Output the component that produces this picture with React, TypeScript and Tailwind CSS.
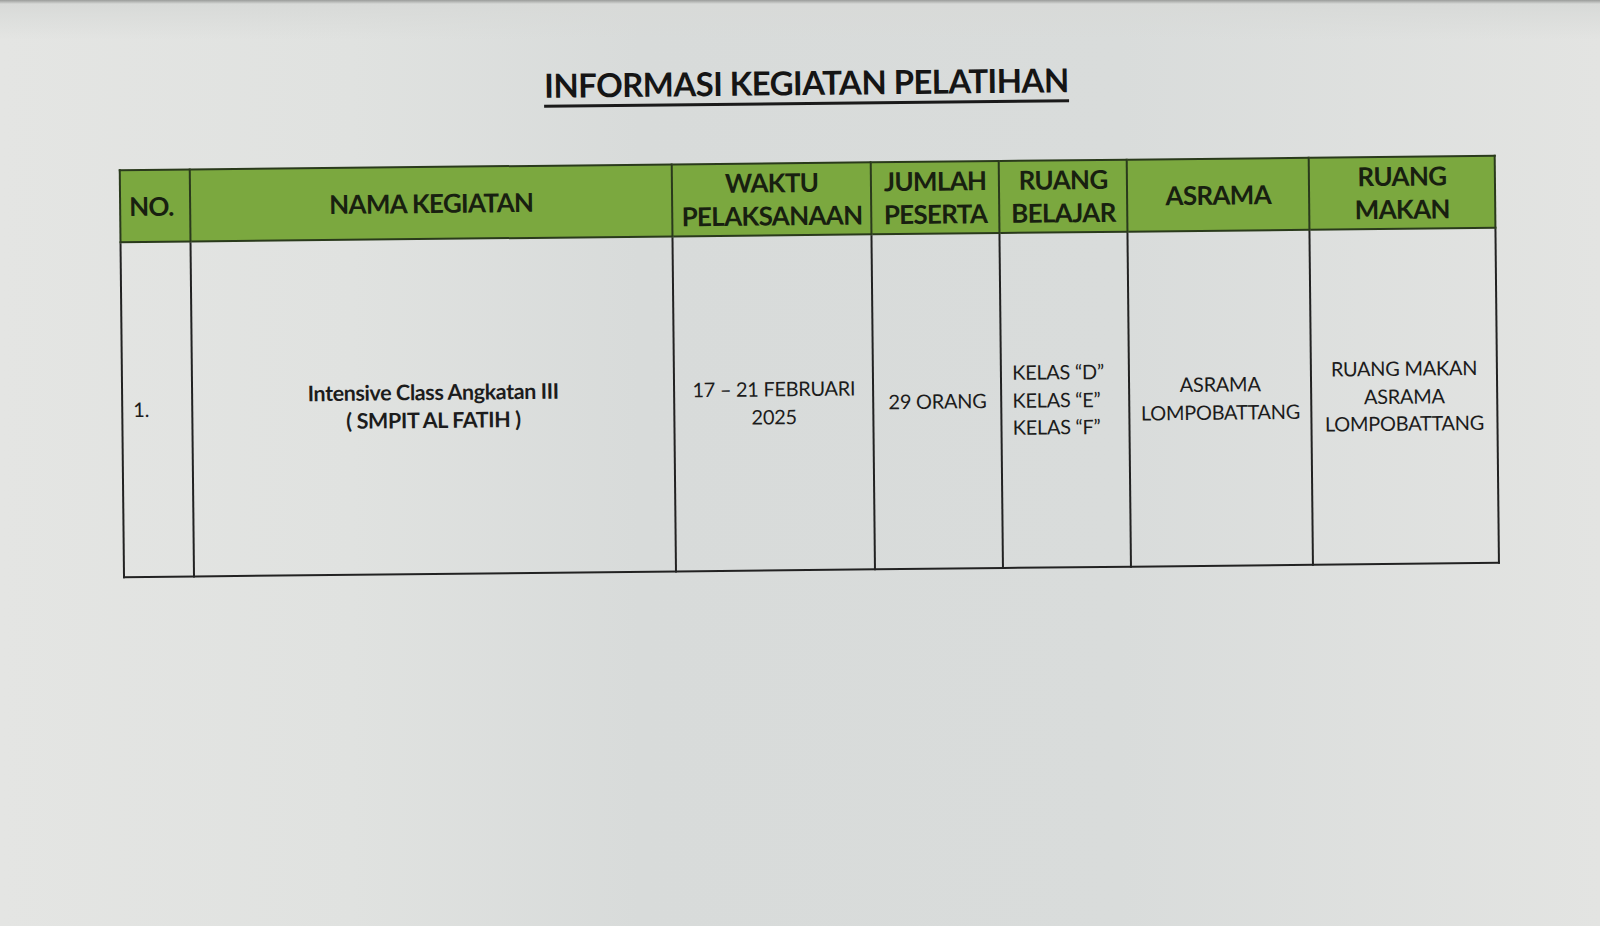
const headers = [
  { label: ["NO."], w: "w-[70px]", align: "left" },
  { label: ["NAMA KEGIATAN"], w: "w-[484px]" },
  { label: ["WAKTU", "PELAKSANAAN"], w: "w-[199px]" },
  { label: ["JUMLAH", "PESERTA"], w: "w-[128px]" },
  { label: ["RUANG", "BELAJAR"], w: "w-[128px]" },
  { label: ["ASRAMA"], w: "w-[182px]" },
  { label: ["RUANG", "MAKAN"], w: "w-[186px]" },
];

export default function App() {
  return (
    <div
      className="h-[926px] w-[1600px] overflow-hidden bg-[#dde0dd] text-[#1c1c1c]"
      style={{
        backgroundImage:
          "linear-gradient(180deg, #9a9c9a 0px, #d8dad8 4px, transparent 40px), linear-gradient(90deg, #e4e5e3 0%, #e0e2e0 22%, #d8dbda 40%, #d9dcdb 70%, #e3e4e2 100%)",
        fontFamily: "Lato, 'Open Sans', sans-serif",
      }}
    >
      <div className="ml-[120px] w-[1377px] -rotate-[0.6deg] pt-[63px]">
        <div className="flex justify-center">
          <h1 className="border-b-[3px] border-[#1a1a1a] pb-[1px] text-[33px] font-bold leading-[38px] tracking-[-0.6px] text-[#151515]">
            INFORMASI KEGIATAN PELATIHAN
          </h1>
        </div>

        <table className="mt-[57px] w-[1377px] border-collapse border-2 border-[#222]">
          <thead>
            <tr className="h-[72px] bg-[#7ba83f]">
              {headers.map((h, i) => (
                <th
                  key={i}
                  className={`${h.w} border-2 border-[#2a3a1c] px-2 text-[26px] font-bold leading-[33px] tracking-[-0.7px] text-[#182010] ${
                    h.align === "left" ? "text-left" : "text-center"
                  }`}
                >
                  {h.label.map((l) => (
                    <div key={l}>{l}</div>
                  ))}
                </th>
              ))}
            </tr>
          </thead>
          <tbody>
            <tr className="h-[335px] text-[20px] leading-[27.5px] tracking-[-0.3px]">
              <td className="border-2 border-[#222] px-[10px] text-left">1.</td>
              <td className="border-2 border-[#222] text-center text-[21.5px] font-bold tracking-[-0.4px]">
                <div>Intensive Class Angkatan III</div>
                <div>( SMPIT AL FATIH )</div>
              </td>
              <td className="border-2 border-[#222] text-center">
                <div>17 – 21 FEBRUARI</div>
                <div>2025</div>
              </td>
              <td className="border-2 border-[#222] text-center">29 ORANG</td>
              <td className="border-2 border-[#222] px-[10px] text-left">
                <div>KELAS “D”</div>
                <div>KELAS “E”</div>
                <div>KELAS “F”</div>
              </td>
              <td className="border-2 border-[#222] text-center">
                <div>ASRAMA</div>
                <div>LOMPOBATTANG</div>
              </td>
              <td className="border-2 border-[#222] text-center">
                <div>RUANG MAKAN</div>
                <div>ASRAMA</div>
                <div>LOMPOBATTANG</div>
              </td>
            </tr>
          </tbody>
        </table>
      </div>
    </div>
  );
}
